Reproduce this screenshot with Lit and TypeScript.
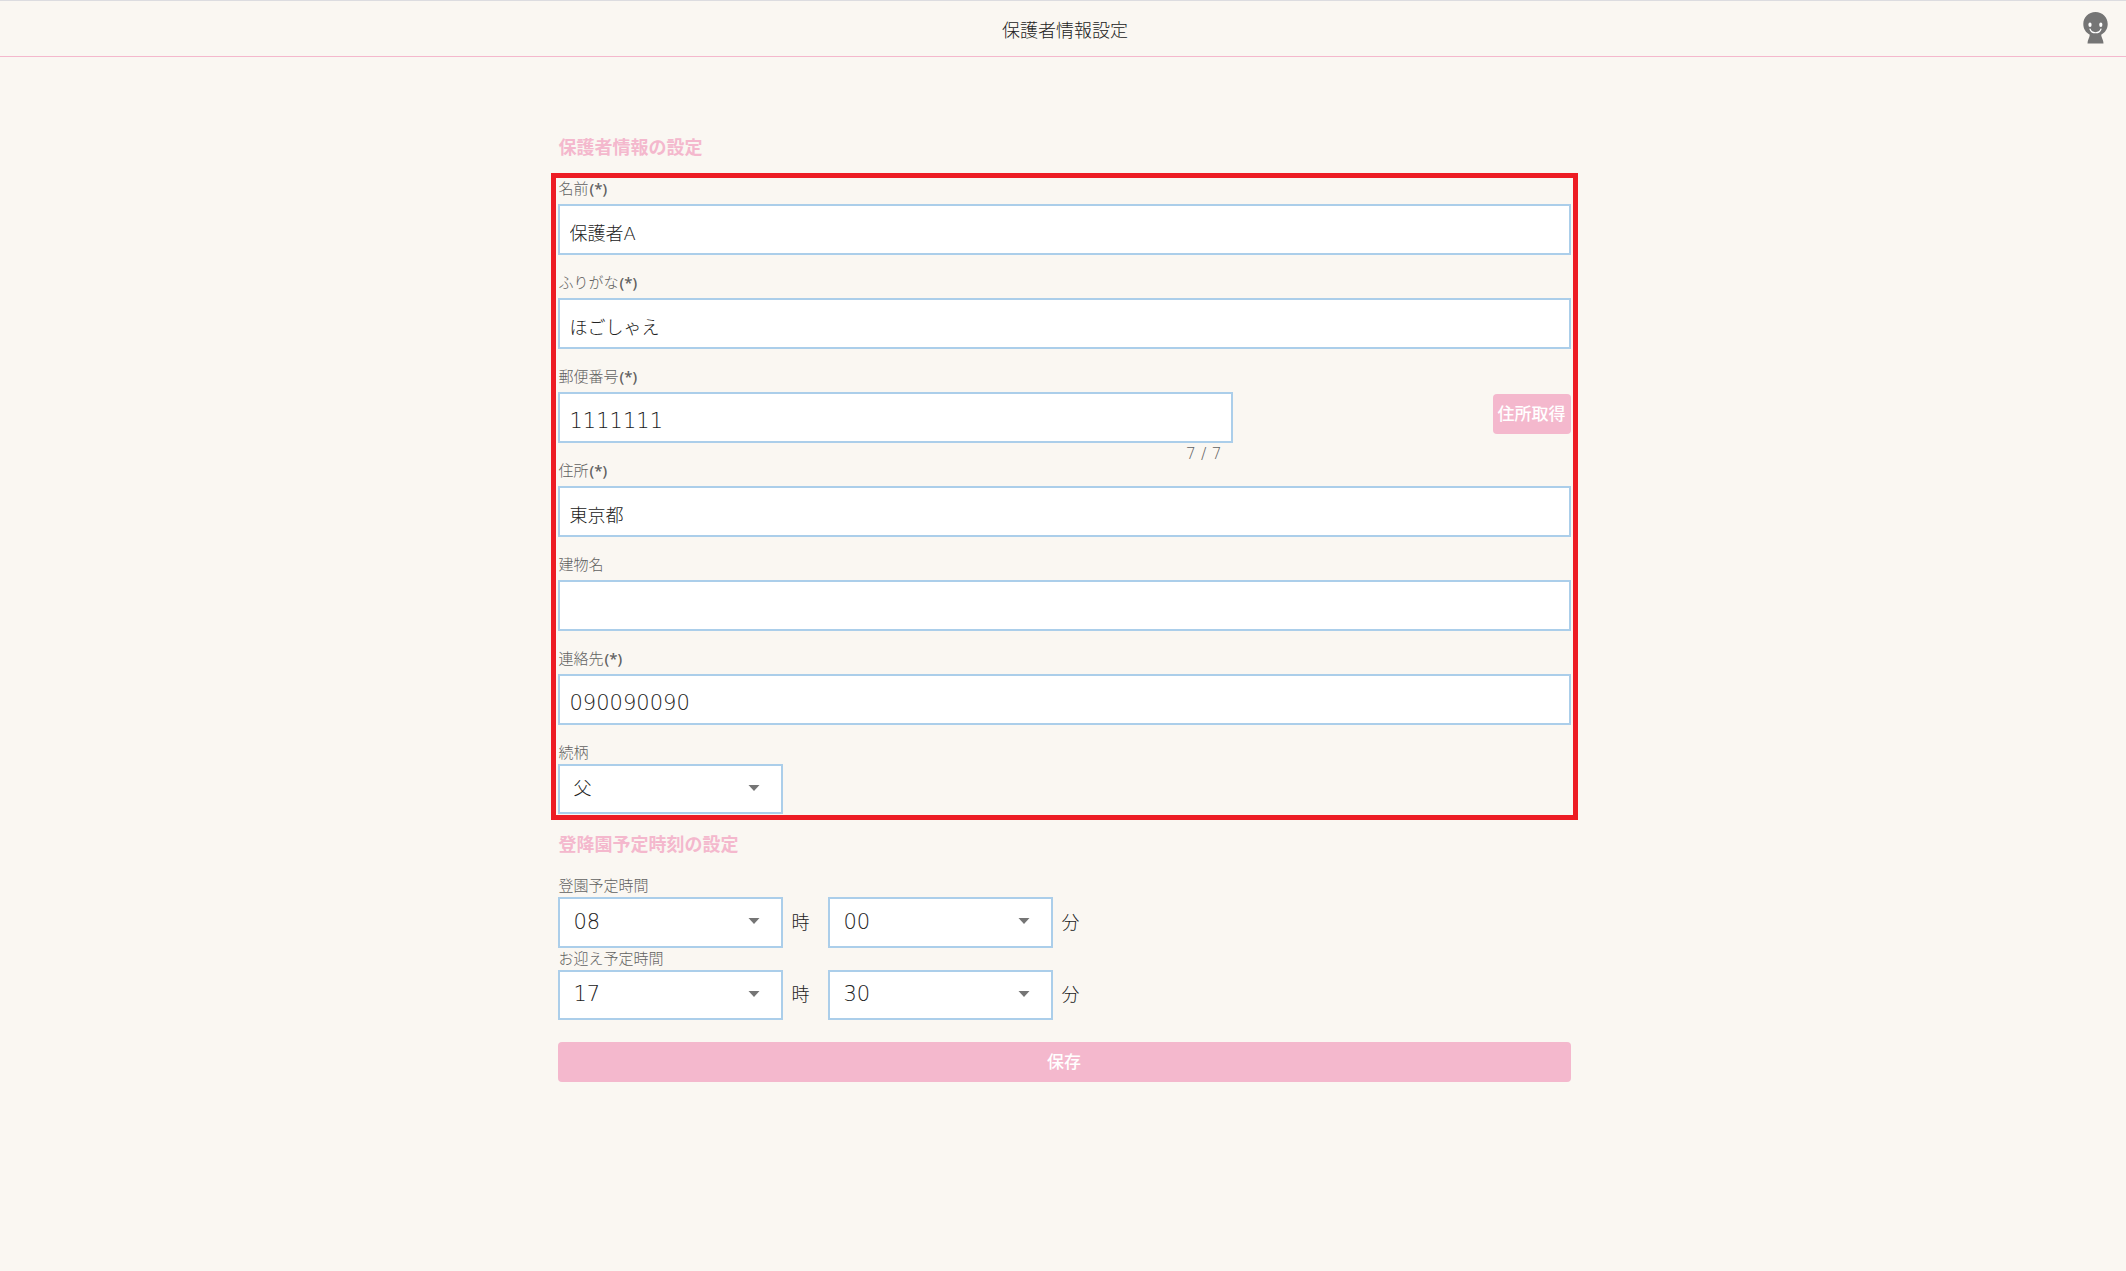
import { LitElement, html, css, svg } from "lit";
import { customElement } from "lit/decorators.js";

interface TextField {
  id: string;
  label: string;
  required: boolean;
  value: string;
  numeric?: boolean;
}

interface TimeRow {
  id: string;
  label: string;
  hour: string;
  minute: string;
}

const nameFields: TextField[] = [
  { id: "name", label: "名前", required: true, value: "保護者A" },
  { id: "kana", label: "ふりがな", required: true, value: "ほごしゃえ" },
];

const postal: TextField = { id: "postal", label: "郵便番号", required: true, value: "1111111", numeric: true };

const contactFields: TextField[] = [
  { id: "address", label: "住所", required: true, value: "東京都" },
  { id: "building", label: "建物名", required: false, value: "" },
  { id: "phone", label: "連絡先", required: true, value: "090090090", numeric: true },
];

const timeRows: TimeRow[] = [
  { id: "arrive", label: "登園予定時間", hour: "08", minute: "00" },
  { id: "pickup", label: "お迎え予定時間", hour: "17", minute: "30" },
];

const avatar = svg`
  <path fill="#757575" d="M12.500 0C5.600 0 .300 5.300.300 12c0 4.800 2.500 8.600 6.500 10.700C6.500 26 4.500 27.500 4.500 31.500h16c0-4-2-5.500-2.300-8.800C22.200 20.600 24.700 16.800 24.700 12 24.700 5.300 19.400 0 12.500 0z"/>
  <ellipse cx="7" cy="12.700" rx="1.600" ry="2.300" fill="#fff"/>
  <ellipse cx="17.800" cy="12.700" rx="1.600" ry="2.300" fill="#fff"/>
  <path d="M7 17C8.500 22 16.500 22 18 17" fill="none" stroke="#fff" stroke-width="1.200" stroke-linecap="round"/>`;

@customElement("app-root")
export class AppRoot extends LitElement {
  static styles = css`
    :host {
      display: block;
      min-height: 100vh;
      background: #faf7f2;
      color: #212121;
      font-family: "Noto Sans CJK JP", sans-serif;
      font-weight: 300;
      font-size: 18px;
    }
    * {
      box-sizing: border-box;
    }
    .bar {
      display: grid;
      grid-template-columns: 1fr auto 1fr;
      align-items: center;
      height: 57px;
      padding: 0 18px 0 22px;
      border-top: 1px solid #dcdce0;
      border-bottom: 1px solid #f4b8cd;
    }
    .title {
      grid-column: 2;
      margin: 0;
      font-size: 18px;
      font-weight: 300;
      line-height: 24px;
    }
    .account {
      justify-self: end;
      display: flex;
      padding: 0 0 2px;
      border: 0;
      background: none;
    }
    .form {
      width: 100%;
      max-width: 1027px;
      margin: 0 auto;
      padding: 77px 7px 40px;
      position: relative;
      left: 1px;
    }
    .heading {
      margin: 0;
      padding-left: 1px;
      color: #f4b8cd;
      font-size: 18px;
      font-weight: 700;
      line-height: 24px;
    }
    .framed {
      margin: 15px -7px 11px;
      padding: 0 2px 1px;
      border: 5px solid #ed1c24;
    }
    .label {
      display: block;
      height: 22px;
      padding-left: 1px;
      color: #616161;
      font-size: 15px;
      line-height: 20px;
    }
    .mark {
      margin-left: 1px;
      font-family: "Noto Sans", sans-serif;
      font-weight: 500;
    }
    .input {
      display: block;
      width: 100%;
      height: 51px;
      margin-top: 4px;
      padding: 4px 10px 0;
      border: 2px solid #abceea;
      border-radius: 0;
      background: #fff;
      color: inherit;
      font-family: "DejaVu Sans Light", "Noto Sans CJK JP", sans-serif;
      font-size: 18px;
      font-weight: 300;
      outline: none;
    }
    .input.numeric {
      padding-top: 6px;
    }
    .input.numeric,
    .select.numeric {
      font-family: "DejaVu Sans Light", "DejaVu Sans", sans-serif;
      font-size: 21px;
      font-weight: 200;
    }
    .details {
      height: 17px;
      padding-right: 11px;
      color: #616161;
      font-family: "DejaVu Sans Light", "DejaVu Sans", sans-serif;
      font-size: 16px;
      font-weight: 200;
      line-height: 22px;
      text-align: right;
    }
    .split {
      display: flex;
      justify-content: space-between;
      align-items: flex-start;
    }
    .wide {
      flex: 0 0 66.66%;
    }
    .button {
      height: 40px;
      padding: 0 5px 2px;
      border: 0;
      border-radius: 4px;
      background: #f4b8cd;
      color: #fff;
      font-family: inherit;
      font-size: 17px;
      font-weight: 500;
      line-height: 24px;
    }
    .lookup {
      margin-top: 28px;
    }
    .save {
      display: block;
      width: 100%;
      margin-top: 22px;
    }
    .times {
      margin-top: 20px;
    }
    .row {
      display: flex;
      align-items: center;
    }
    .picker {
      position: relative;
      flex: 0 1 225px;
      max-width: 225px;
    }
    .select {
      display: block;
      width: 100%;
      height: 51px;
      padding: 0 40px 4px 14px;
      border: 2px solid #abceea;
      border-radius: 0;
      background: #fff;
      color: inherit;
      font: inherit;
      appearance: none;
      outline: none;
    }
    .select.numeric {
      padding-bottom: 2px;
    }
    .short {
      height: 50px;
    }
    .arrow {
      position: absolute;
      right: 23px;
      top: 21px;
      pointer-events: none;
    }
    .unit {
      flex: 0 0 45px;
      padding: 0 0 4px 9px;
      line-height: 24px;
    }
  `;

  private label(id: string, text: string, required = false) {
    return html`<label class="label" for=${id}
      >${text}${required ? html`<span class="mark">(*)</span>` : ""}</label
    >`;
  }

  private field(f: TextField, counter = "") {
    return html`<div>
      ${this.label(f.id, f.label, f.required)}
      <input class="input ${f.numeric ? "numeric" : ""}" id=${f.id} type="text" .value=${f.value} />
      <div class="details">${counter}</div>
    </div>`;
  }

  private picker(id: string, value: string, numeric: boolean, short: boolean, name: string) {
    return html`<div class="picker">
      <select
        class="select ${numeric ? "numeric" : ""} ${short ? "short" : ""}"
        id=${id}
        aria-label=${name}
      >
        <option selected>${value}</option>
      </select>
      <svg class="arrow" width="12" height="6" viewBox="0 0 12 6"><path d="M0.500 0h11L6 6z" fill="#757575" /></svg>
    </div>`;
  }

  render() {
    return html`
      <header class="bar">
        <h1 class="title">保護者情報設定</h1>
        <button class="account" aria-label="アカウント">
          <svg width="25" height="32" viewBox="0 0 25 32">${avatar}</svg>
        </button>
      </header>
      <main class="form">
        <h2 class="heading">保護者情報の設定</h2>
        <section class="framed">
          ${nameFields.map((f) => this.field(f))}
          <div class="split">
            <div class="wide">${this.field(postal, "7 / 7")}</div>
            <button class="button lookup">住所取得</button>
          </div>
          ${contactFields.map((f) => this.field(f))} ${this.label("relation", "続柄")}
          ${this.picker("relation", "父", false, true, "続柄")}
        </section>
        <h2 class="heading">登降園予定時刻の設定</h2>
        <section class="times">
          ${timeRows.map(
            (r, i) => html`
              ${this.label(r.id, r.label)}
              <div class="row">
                ${this.picker(r.id, r.hour, true, i === 1, r.label + " 時")}
                <span class="unit">時</span>
                ${this.picker(r.id + "-minute", r.minute, true, i === 1, r.label + " 分")}
                <span class="unit">分</span>
              </div>
            `
          )}
        </section>
        <button class="button save">保存</button>
      </main>
    `;
  }
}
